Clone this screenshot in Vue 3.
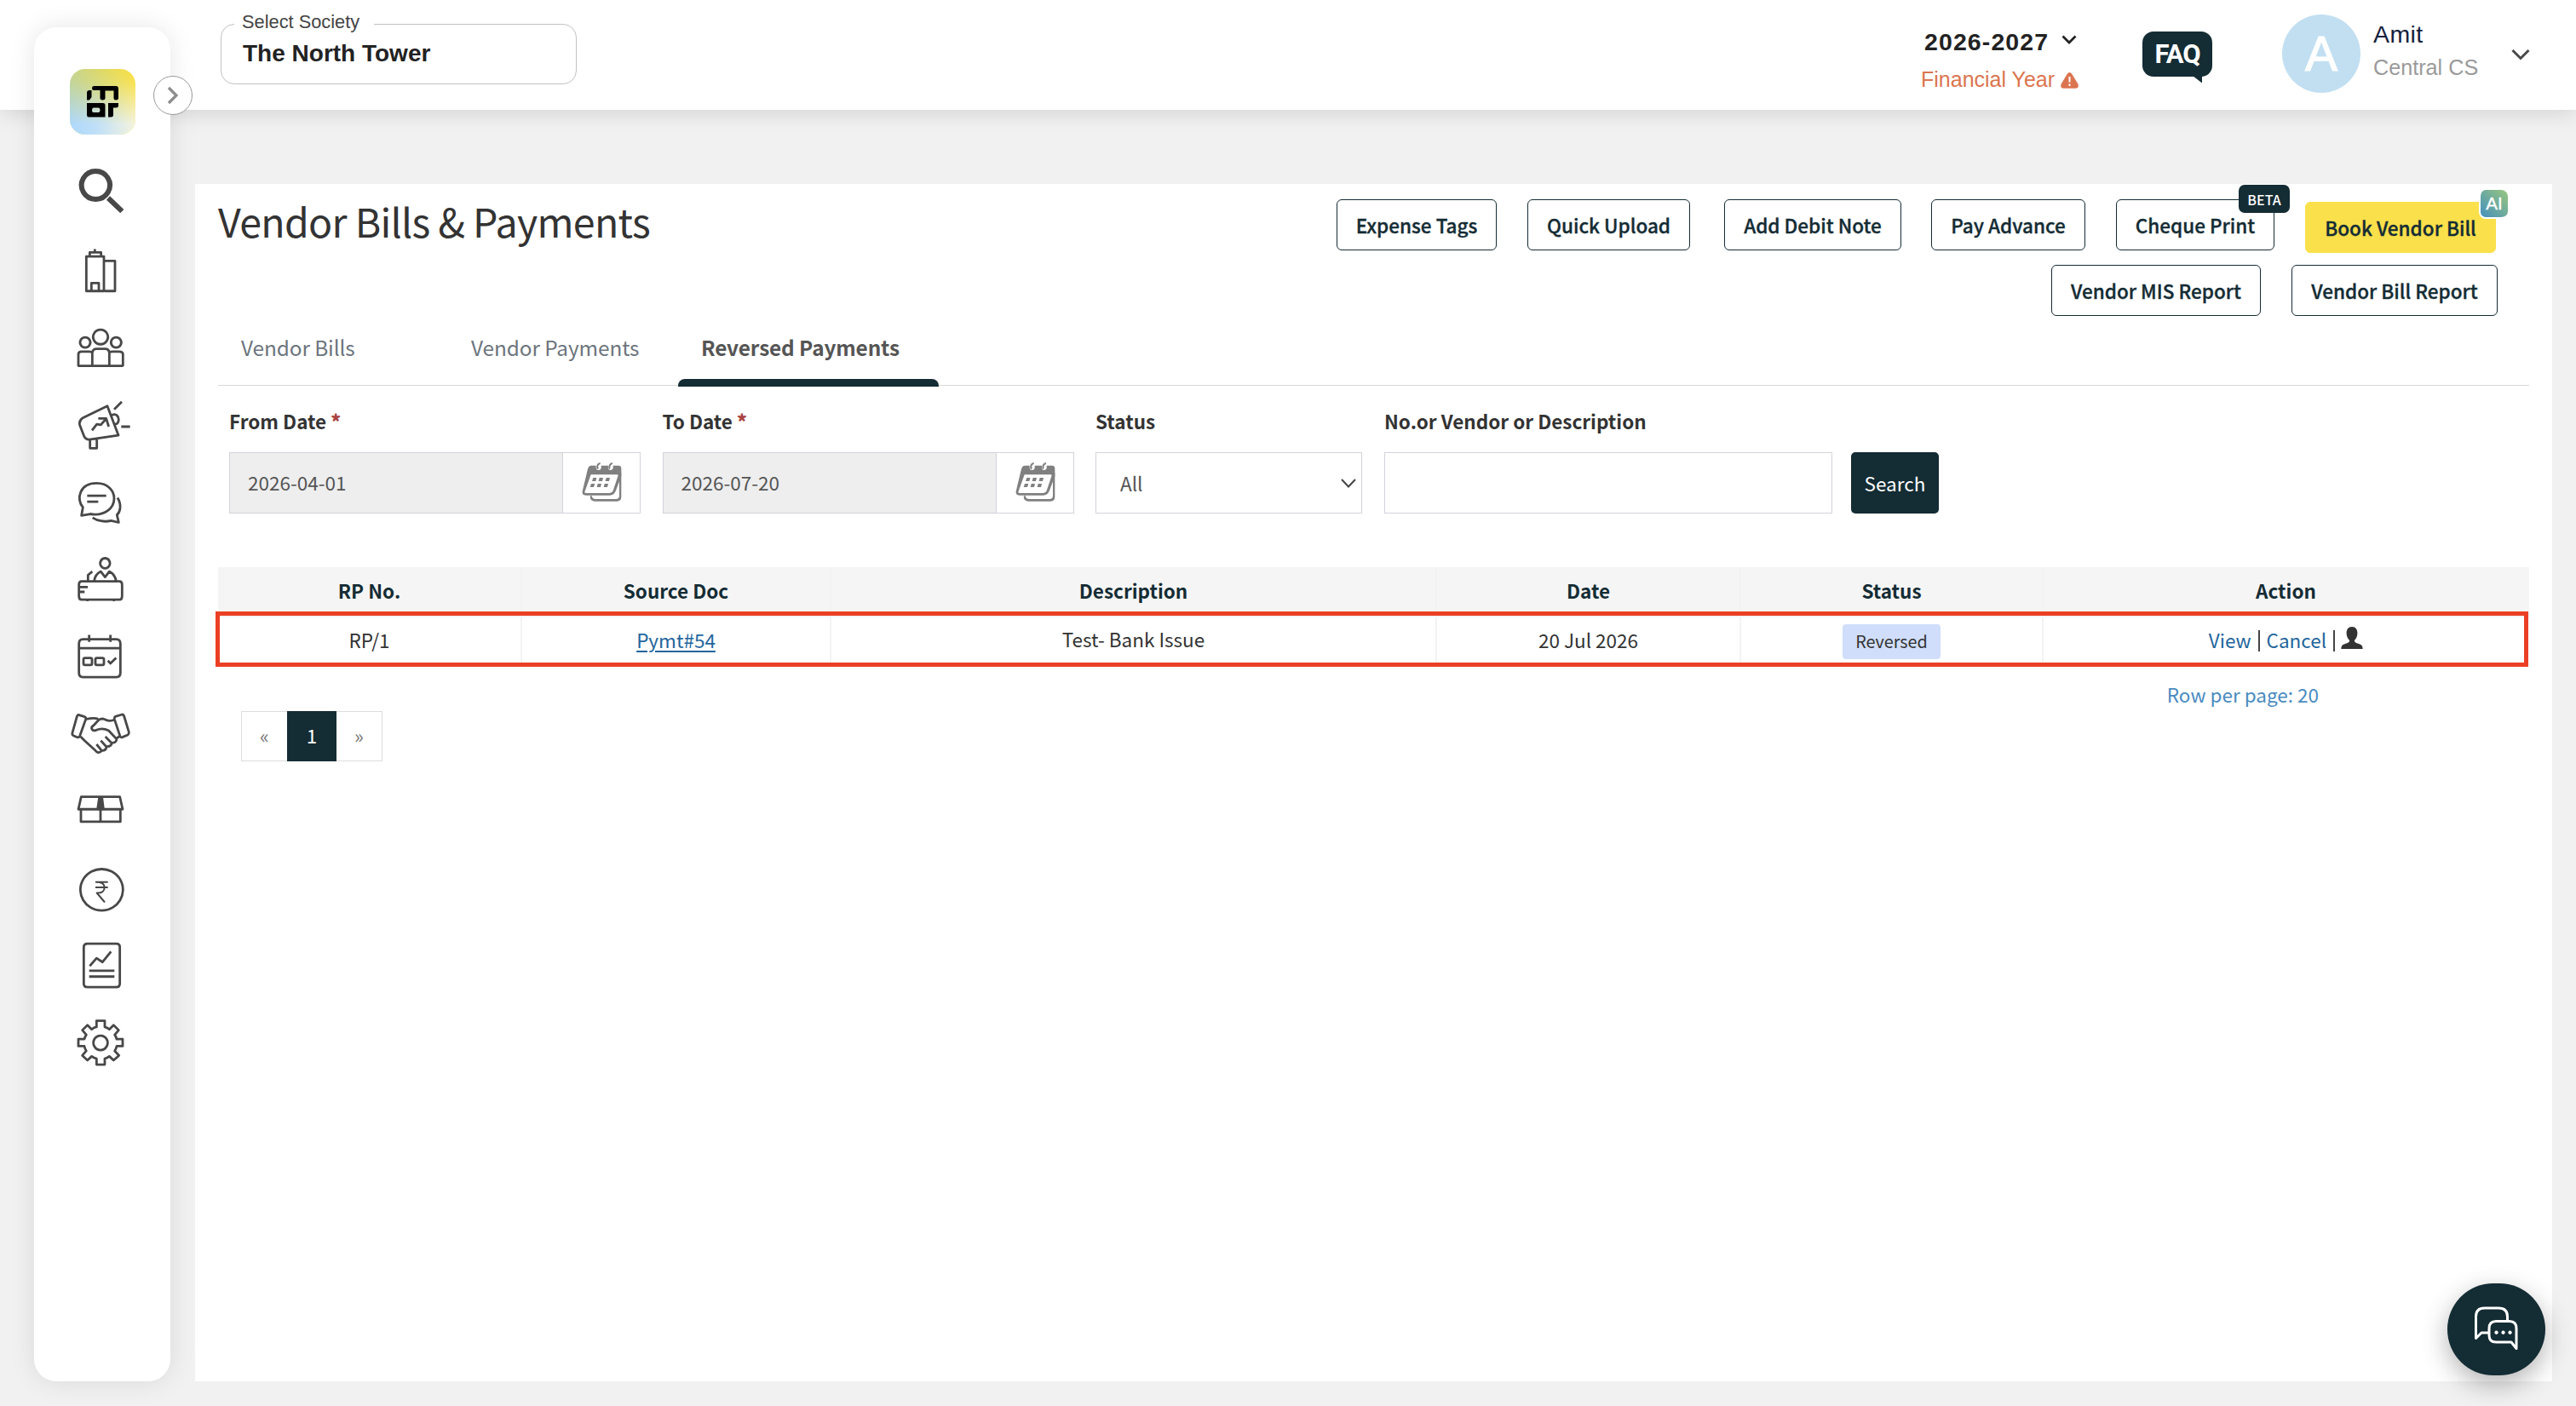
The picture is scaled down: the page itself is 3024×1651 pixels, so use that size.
<script setup>
const frameA = 'translate(60 60) scale(0.3333 0.3571)'
const frameB = 'translate(60 560) scale(0.3333 0.4591)'

const navIcons = [
  { name: 'search', frame: frameA, paths: [
    { d: 'M157 395a50 46 0 1 0 .1 0Z', w: 6 },
    { d: 'M201 483L250 527', w: 6 },
  ] },
  { name: 'society', frame: frameA, paths: [
    { d: 'M124 675H186V789H124ZM189 690H225V789H189M136 672V662H176V672M154 660V651M142 788V763H168V788' },
  ] },
  { name: 'members', frame: frameA, paths: [
    { d: 'M174 916a26 24 0 1 0 .1 0ZM120 941a18 17 0 1 0 .1 0ZM229 941a18 17 0 1 0 .1 0Z' },
    { d: 'M96 1036V997Q96 988 107 988H134Q143 988 145 992M145 1034V992Q147 979 160 979H190Q204 979 205 992V1034M205 992Q207 988 215 988H240Q253 988 253 997V1036M94 1035H254' },
  ] },
  { name: 'announcements', frame: frameA, paths: [
    { d: 'M198 1167L237 1263L135 1277Q122 1278 116 1266L101 1230Q97 1216 110 1207ZM214 1197C230 1190 238 1202 238 1212C237 1222 232 1228 225 1226M137 1279V1306H161V1276M222 1178L249 1153M247 1235H278M144 1247L161 1227L175 1229L194 1209M166 1208H194L203 1235' },
  ] },
  { name: 'messages', frame: frameA, paths: [
    { d: 'M107 1527L112 1500C88 1475 98 1421 160 1421C202 1421 222 1447 222 1471C222 1502 190 1530 138 1522ZM127 1462H194M127 1482H166M234 1469C249 1492 244 1515 232 1525L238 1550L211 1544C188 1550 162 1544 146 1534' },
  ] },
  { name: 'helpdesk', frame: frameB, paths: [
    { d: 'M190 208a17 13 0 1 0 .1 0ZM107 267H241Q250 267 250 276V305Q250 314 241 314H107Q98 314 98 305V276Q98 267 107 267ZM152 266Q154 250 175 242L190 256L205 242Q224 248 229 266M130 266V251L145 242M98 282H129M98 294H118M124 315H132M217 315H225' },
  ] },
  { name: 'calendar', frame: frameB, paths: [
    { d: 'M112 415H230Q244 415 244 427V501Q244 512 230 512H112Q98 512 98 501V427Q98 415 112 415ZM98 438H244M134 404V422M209 404V422M119 463H139Q144 463 144 467V477Q144 481 139 481H119Q114 481 114 477V467Q114 463 119 463ZM161 463H181Q186 463 186 467V477Q186 481 181 481H161Q156 481 156 477V467Q156 463 161 463ZM200 470L209 477L229 463' },
  ] },
  { name: 'vendors', frame: 'translate(76 830) scale(0.3333)', paths: [
    { d: 'M48 28L70 35Q76 38 74 44L53 103Q50 109 44 107L30 101Q25 98 27 91L43 34Q45 29 48 28ZM178 34L202 27Q207 27 209 33L226 89Q227 95 222 99L203 107Q197 109 195 104L175 43Q174 37 178 34Z' },
    { d: 'M75 43C92 42 102 36 118 43M56 105L70 119L108 154Q118 166 128 157L130 154L112 132M130 154Q145 155 147 141L127 119M147 140Q163 141 166 128L143 105M166 127Q184 126 182 113L155 84Q133 72 111 82C95 88 89 72 102 65L120 46Q132 38 145 46Q160 52 174 46M182 112L192 104' },
  ] },
  { name: 'inventory', frame: frameB, paths: [
    { d: 'M106 818H242L252 850H96ZM105 850V882H244V850M174 818V882' },
    { d: 'M170 820H179L184 849H164Z', fill: true },
  ] },
  { name: 'accounts', frame: frameB, paths: [
    { d: 'M178 1003a75 53 0 1 0 .1 0Z' },
    { d: 'M156 1036H200M156 1050H200M158 1036Q188 1036 188 1050Q188 1065 161 1064L189 1088', w: 2 },
  ] },
  { name: 'reports', frame: frameB, paths: [
    { d: 'M128 1194H230Q242 1194 242 1203V1296Q242 1305 230 1305H128Q115 1305 115 1296V1203Q115 1194 128 1194ZM136 1251L160 1231L181 1241L211 1214M134 1263H223M134 1278H223' },
  ] },
  { name: 'settings', frame: frameB, paths: [
    { d: 'M160 1391H189V1407Q198 1409 205 1413L220 1402L238 1415L224 1427Q230 1433 231 1438H252V1456H231Q229 1463 224 1468L239 1480L220 1492L205 1482Q198 1486 189 1488V1503H160V1488Q150 1486 143 1482L128 1492L110 1480L124 1468Q119 1463 117 1456H96V1438H117Q119 1432 124 1427L110 1415L128 1402L143 1413Q151 1408 160 1407ZM174 1429a25 18.500 0 1 0 .1 0Z' },
  ] },
]

const actions = [
  { label: 'Expense Tags', width: 188 },
  { label: 'Quick Upload', width: 191, gap: 36 },
  { label: 'Add Debit Note', width: 208, gap: 40 },
  { label: 'Pay Advance', width: 181, gap: 35 },
  { label: 'Cheque Print', width: 186, gap: 36, badge: 'BETA' },
]
const tabs = ['Vendor Bills', 'Vendor Payments', 'Reversed Payments']
const columns = ['RP No.', 'Source Doc', 'Description', 'Date', 'Status', 'Action']
const dates = [
  { label: 'From Date', value: '2026-04-01' },
  { label: 'To Date', value: '2026-07-20' },
]
</script>

<template>
  <div class="page">
    <header class="topbar">
      <div class="society">
        <span class="society-label">Select Society</span>
        <span class="society-name">The North Tower</span>
      </div>
      <div class="year">
        <div class="year-value">
          <span>2026-2027</span>
          <svg width="18" height="11" viewBox="0 0 18 11"><path d="M1.500 1.500L9 9L16.500 1.500" fill="none" stroke="#222" stroke-width="2.800" /></svg>
        </div>
        <div class="year-note">
          <span>Financial Year</span>
          <svg width="21" height="19" viewBox="0 0 21 19">
            <path d="M7.800 1.700Q10.500-1.600 13.200 1.700L20.300 13.500Q22 18.500 17.500 18.700H3.500Q-1 18.500.7 13.500Z" fill="#db7550" />
            <path d="M10.500 5V11.500M10.500 13.500V16" stroke="#fff" stroke-width="2" />
          </svg>
        </div>
      </div>
      <div class="faq">
        <span>FAQ</span>
        <svg class="faq-tail" width="12" height="9" viewBox="0 0 12 9"><path d="M0 0H11V8.500Z" fill="#142c34" /></svg>
      </div>
      <div class="avatar">A</div>
      <div class="user">
        <span class="user-name">Amit</span>
        <span class="user-role">Central CS</span>
      </div>
      <svg class="user-caret" width="22" height="14" viewBox="0 0 22 14"><path d="M1.500 2L11 11.500L20.500 2" fill="none" stroke="#484848" stroke-width="3" /></svg>
    </header>

    <aside class="sidebar">
      <svg class="logo" width="77" height="77" viewBox="82 81 77 77">
        <defs>
          <linearGradient id="lg-top" x1="0" y1="0" x2="1" y2="0"><stop offset="0" stop-color="#c6d48c" /><stop offset="1" stop-color="#fae03f" /></linearGradient>
          <linearGradient id="lg-bottom" x1="0" y1="0" x2="1" y2="0"><stop offset="0" stop-color="#aed8fc" /><stop offset=".4" stop-color="#bfdff8" /><stop offset="1" stop-color="#f5f4df" /></linearGradient>
          <linearGradient id="lg-fade" x1="0" y1="0" x2="0" y2="1"><stop offset="0" stop-color="#000" /><stop offset=".2" stop-color="#222" /><stop offset=".85" stop-color="#fff" /></linearGradient>
          <mask id="lg-mask"><rect x="82" y="81" width="77" height="77" fill="url(#lg-fade)" /></mask>
        </defs>
        <rect x="82" y="81" width="77" height="77" rx="18" fill="url(#lg-top)" />
        <rect x="82" y="81" width="77" height="77" rx="18" fill="url(#lg-bottom)" mask="url(#lg-mask)" />
        <path d="M110 101H136Q139 101 139 104V115Q139 117.500 136 117.500Q133.500 117.500 133.500 115V106.500H123.500V115Q123.500 117.500 120.500 117.500Q117.500 117.500 117.500 115V106H110Q108 106 108 103.500Q108 101 110 101ZM105 106H107.500V114L105 117.500H102V109Q102 106 105 106ZM102 121H121Q123.500 121 123.500 123.500V137.500H104Q102 137.500 102 135ZM109.500 126.500Q108 127 108 129Q108 132 109.500 132H115.500Q117.500 132 117.500 129Q117.500 126.500 115.500 126.500ZM127 121H139V124Q139 126.500 136 126.500H133V135Q133 137.500 130 137.500H127Z" fill-rule="evenodd" fill="#000" />
      </svg>
      <nav class="nav">
        <svg v-for="(icon, i) in navIcons" :key="icon.name" width="80" height="91" :viewBox="`80 ${179 + i * 91} 80 91`">
          <g :transform="icon.frame">
            <path
              v-for="(p, j) in icon.paths" :key="j" :d="p.d"
              :fill="p.fill ? '#484848' : 'none'" stroke="#484848" :stroke-width="p.w || 2.8"
              stroke-linejoin="round" vector-effect="non-scaling-stroke"
            />
          </g>
        </svg>
      </nav>
      <button class="expand">
        <svg width="14" height="22" viewBox="0 0 14 22"><path d="M2 2L11 11L2 20" fill="none" stroke="#8c8c8c" stroke-width="3.200" /></svg>
      </button>
    </aside>

    <main class="card">
      <section class="card-head">
        <h1>Vendor Bills &amp; Payments</h1>
        <div class="actions">
          <div class="action-row">
            <button v-for="a in actions" :key="a.label" class="btn" :style="{ width: a.width + 'px', marginLeft: (a.gap || 0) + 'px' }">
              {{ a.label }}<span v-if="a.badge" class="beta">{{ a.badge }}</span>
            </button>
            <button class="btn book">Book Vendor Bill<span class="ai">AI</span></button>
          </div>
          <div class="action-row second">
            <button class="btn mis">Vendor MIS Report</button>
            <button class="btn bill">Vendor Bill Report</button>
          </div>
        </div>
      </section>

      <div class="tabs">
        <a v-for="(t, i) in tabs" :key="t" class="tab" :class="{ active: i === 2 }">{{ t }}</a>
      </div>

      <form class="filters">
        <div v-for="d in dates" :key="d.label" class="field date">
          <label>{{ d.label }} <b class="req">*</b></label>
          <div class="control">
            <span class="date-value">{{ d.value }}</span>
            <span class="date-icon">
              <svg width="48" height="48" viewBox="38 36 144 144">
                <path d="M163 80L177 75V160Q177 176 162 176H84Q68 176 67 160L72 154Q74 168 86 168H158Q170 168 170 156V90Z" fill="#808080" />
                <path d="M72 50H88Q86 67 98 66Q108 64 106 50H131Q129 67 140 66Q150 64 148 50H167Q177 50 177 60V88L158 138Q152 155 136 155H52Q38 155 40 141L58 66Q61 50 72 50ZM70 82L49 140Q46 147 54 147H136Q145 147 148 139L167 82Z" fill-rule="evenodd" fill="#808080" />
                <path d="M96 61Q91 58 93 51Q95 43 103 42M137 61Q133 58 136 51Q138 43 146 42" fill="none" stroke="#808080" stroke-width="6" />
                <path d="M78 93H90L87 105H74ZM100 93H113L110 105H97ZM124 93H137L134 105H121ZM71 114H84L80 126H67ZM94 114H107L104 126H91ZM118 114H131L128 126H115Z" fill="#808080" />
              </svg>
            </span>
          </div>
        </div>
        <div class="field status">
          <label>Status</label>
          <div class="control select">
            <span>All</span>
            <svg width="18" height="11" viewBox="0 0 18 11"><path d="M1 1L9 9.500L17 1" fill="none" stroke="#444" stroke-width="2" /></svg>
          </div>
        </div>
        <div class="field query">
          <label>No.or Vendor or Description</label>
          <div class="control"></div>
        </div>
        <button type="button" class="search-btn">Search</button>
      </form>

      <div class="table">
        <div class="row thead">
          <div v-for="c in columns" :key="c" class="cell">{{ c }}</div>
        </div>
        <div class="row tbody">
          <div class="cell">RP/1</div>
          <div class="cell"><a class="doc">Pymt#54</a></div>
          <div class="cell desc">Test- Bank Issue</div>
          <div class="cell">20 Jul 2026</div>
          <div class="cell"><span class="pill">Reversed</span></div>
          <div class="cell ops">
            <a>View</a><i class="bar"></i><a>Cancel</a><i class="bar"></i>
            <svg width="26" height="26" viewBox="0 0 26 26"><path d="M13 0C8.500 0 6.600 3.500 6.600 7.500C6.600 11.500 8.300 14 10.200 16C10 18.500 8.500 19 5 20C2 21 .5 22 .3 26H25.700C25.500 22 24 21 21 20C17.500 19 16 18.500 15.800 16C17.700 14 19.400 11.500 19.400 7.500C19.400 3.500 17.500 0 13 0Z" fill="#333" /></svg>
          </div>
        </div>
      </div>

      <div class="per-page">Row per page: 20</div>
      <div class="pagination">
        <span class="pg">«</span><span class="pg current">1</span><span class="pg">»</span>
      </div>
    </main>

    <button class="chat">
      <svg width="52" height="52" viewBox="0 0 52 52" fill="none" stroke="#fff" stroke-width="3" stroke-linejoin="round">
        <path d="M19 31H9L2.500 37.500V12Q2.500 2 12.500 2H29Q39.500 2 39.500 12V17" />
        <path d="M26 17.500H42Q50 17.500 50 26V49.500L44 42H26Q18 42 18 34V26Q18 17.500 26 17.500Z" />
        <path d="M26.500 28.500a2.200 2.200 0 1 0 .1 0ZM34.500 28.500a2.200 2.200 0 1 0 .1 0ZM42.500 28.500a2.200 2.200 0 1 0 .1 0Z" fill="#fff" stroke="none" />
      </svg>
    </button>
  </div>
</template>

<style>
html, body { margin: 0; background: #f1f1f1; }
</style>

<style scoped>
.page {
  position: relative;
  box-sizing: border-box;
  width: 3024px;
  height: 1651px;
  overflow: hidden;
  background: #f1f1f1;
  font-family: "Noto Sans CJK SC", "Noto Sans", sans-serif;
  font-size: 22.5px;
  color: #333;
}
.page * { box-sizing: border-box; }
button { font: inherit; padding: 0; white-space: nowrap; }
svg { display: block; flex: none; }

.topbar {
  display: flex;
  align-items: flex-start;
  height: 129px;
  padding: 0 54px 0 259px;
  background: #fff;
  box-shadow: 0 4px 24px rgba(0, 0, 0, .12);
  font-family: "Liberation Sans", Arial, sans-serif;
}
.society {
  display: flex;
  flex-direction: column;
  width: 418px;
  height: 71px;
  margin-top: 28px;
  margin-right: auto;
  padding-left: 15px;
  border: 1px solid #c2c2c2;
  border-radius: 16px;
}
.society-label {
  align-self: flex-start;
  width: 164px;
  height: 24px;
  margin-top: -15px;
  padding-left: 9px;
  background: #fff;
  font-size: 21.8px;
  line-height: 24px;
  color: #444;
}
.society-name {
  padding-left: 10px;
  margin-top: 9px;
  font-size: 28px;
  line-height: 32px;
  font-weight: 700;
  color: #222;
}
.year { margin-top: 31px; width: 184px; }
.year-value { display: flex; align-items: center; gap: 15px; padding-left: 4px; font-size: 28.5px; line-height: 36px; font-weight: 700; letter-spacing: 1.1px; color: #222; }
.year-value svg { margin-top: -6px; }
.year-note { display: flex; align-items: center; gap: 7px; font-size: 25px; line-height: 30px; margin-top: 11px; color: #db7550; white-space: nowrap; }
.year-note svg { margin-top: 3px; }
.faq {
  position: relative;
  width: 82px;
  height: 53px;
  margin: 37px 0 0 76px;
  border-radius: 13px;
  background: #142c34;
  color: #fff;
  font-family: Roboto, sans-serif;
  font-size: 31px;
  line-height: 54px;
  font-weight: 700;
  letter-spacing: -1px;
  text-align: center;
}
.faq-tail { position: absolute; left: 59px; top: 52px; }
.avatar {
  width: 92px;
  height: 92px;
  margin: 17px 0 0 82px;
  border-radius: 50%;
  background: #c2dff2;
  color: #fff;
  font-size: 57px;
  line-height: 92px;
  font-weight: 400;
  -webkit-text-stroke: 1.2px #fff;
  text-align: center;
}
.user { display: flex; flex-direction: column; width: 177px; padding-left: 15px; margin-top: 24px; }
.user-name { font-size: 28.500px; line-height: 32px; color: #16213e; letter-spacing: .4px; }
.user-role { font-size: 25.200px; line-height: 30px; margin-top: 8px; color: #9a9a9a; }
.user-caret { margin-top: 57px; }

.sidebar {
  position: absolute;
  left: 40px;
  top: 32px;
  display: flex;
  flex-direction: column;
  align-items: center;
  width: 160px;
  height: 1590px;
  border-radius: 26px;
  background: #fff;
  box-shadow: 0 0 30px rgba(0, 0, 0, .1);
}
.logo { margin: 49px 0 0 1px; }
.nav { display: flex; flex-direction: column; margin-top: 21px; }
.expand {
  position: absolute;
  left: 140px;
  top: 57px;
  display: flex;
  align-items: center;
  justify-content: center;
  width: 46px;
  height: 46px;
  border: 1px solid #999;
  border-radius: 50%;
  background: #fff;
}

.card {
  width: 2767px;
  height: 1406px;
  margin: 87px 0 0 229px;
  padding: 0 27px;
  background: #fff;
  position: relative;
}
.card-head { display: flex; justify-content: space-between; height: 155px; }
h1 { margin: 13px 0 0; font-size: 46.5px; line-height: 60px; font-weight: 400; letter-spacing: -.7px; white-space: nowrap; }
.actions { display: flex; flex-direction: column; align-items: flex-end; padding: 18px 37px 0 0; }
.action-row { display: flex; padding-right: 2px; }
.action-row.second { padding: 0; margin-top: 14px; }
.btn {
  position: relative;
  height: 60px;
  border: 1.5px solid #142c34;
  border-radius: 6px;
  background: #fff;
  color: #142c34;
  font-weight: 500;
  line-height: 56px;
  -webkit-text-stroke: .35px currentColor;
}
.book { width: 224px; margin: 3px 0 0 36px; border-color: #fae04b; background: #fae04b; }
.mis { width: 246px; }
.bill { width: 242px; margin-left: 36px; }
.beta {
  position: absolute;
  right: -19px;
  top: -18px;
  width: 60px;
  height: 33px;
  border-radius: 7px;
  background: #142c34;
  color: #fff;
  font-size: 16px;
  line-height: 34px;
  -webkit-text-stroke: 0;
}
.ai {
  position: absolute;
  right: -15px;
  top: -15px;
  width: 34px;
  height: 34px;
  border: 2px solid #fff;
  border-top: 0;
  border-right: 0;
  border-radius: 8px;
  background: linear-gradient(45deg, #4590bd, #98c67e);
  color: #fff;
  font-family: "Liberation Sans", sans-serif;
  font-size: 20.5px;
  line-height: 32px;
  font-weight: 400;
}

.tabs { display: flex; height: 82px; border-bottom: 1px solid #d9d9d9; }
.tab { position: relative; width: 270px; padding-left: 27px; font-size: 24.400px; line-height: 73px; letter-spacing: -.1px; color: #6c757d; white-space: nowrap; }
.tab.active { width: 306px; padding-left: 27px; color: #555; font-weight: 700; letter-spacing: -.15px; }
.tab.active::after { content: ""; position: absolute; left: 0; right: 0; bottom: -2px; height: 9px; border-radius: 8px 8px 0 0; background: #142c34; }

.filters { display: flex; align-items: flex-end; padding: 26px 0 0 13px; }
.field label { display: block; height: 30px; margin-bottom: 22px; line-height: 30px; font-weight: 700; white-space: nowrap; }
.req { color: #a94442; }
.control { display: flex; height: 72px; border: 1px solid #d3d3dc; line-height: 69px; color: #555; }
.date { width: 483px; margin-right: 25.500px; }
.date-value { flex: 1; padding-left: 21px; background: #eee; border-right: 1px solid #d3d3dc; }
.date-icon { display: flex; align-items: center; justify-content: center; width: 90px; padding: 0 0 2px 2px; }
.status { width: 313px; margin-right: 26px; }
.select { align-items: center; justify-content: space-between; padding: 0 6px 0 28px; }
.query { width: 526px; margin-right: 22px; }
.search-btn { width: 103px; height: 72px; border: 0; border-radius: 5px; background: #142c34; color: #fff; line-height: 70px; }

.table { margin-top: 63px; }
.row { display: grid; grid-template-columns: 357px 363px 711px 357px 355px 569px; }
.cell { display: flex; align-items: center; justify-content: center; }
.cell:not(:last-child) { border-right: 2px solid #f3f3f3; }
.thead { height: 52px; background: #f5f5f5; color: #142c34; font-weight: 700; line-height: 54px; }
.thead .cell:not(:last-child) { border-color: #f2f2f2; }
.tbody { position: relative; height: 65px; box-shadow: inset 0 7px #f3f3f3; }
.tbody::after { content: ""; position: absolute; left: -3px; right: 1px; top: 0; bottom: 0; border: 5px solid #eb3f25; }
.doc, .ops a { color: #23659c; }
.doc { text-decoration: underline; text-decoration-thickness: 2px; text-underline-offset: 3px; }
.desc { padding-bottom: 2px; }
.pill { height: 41px; margin-top: 6px; padding: 0 15px; border-radius: 4px; background: #d0defb; font-size: 19.800px; line-height: 39px; }
.ops .bar { width: 2px; height: 25px; margin: 3px 8px 0; background: #444; }
.ops svg { margin: -3px 0 0 -1px; }
.per-page { margin-top: 16px; padding-right: 247px; line-height: 32px; text-align: right; color: #4a8bbf; }
.pagination { display: flex; width: 166px; height: 59px; margin: 4px 0 0 27px; border: 1px solid #ddd; }
.pg { flex: 1; line-height: 55px; text-align: center; color: #777; }
.pg.current { flex: 0 0 58px; margin: -1px 0; line-height: 57px; background: #142c34; color: #fff; }

.chat {
  position: absolute;
  left: 2873px;
  top: 1507px;
  display: flex;
  align-items: center;
  justify-content: center;
  width: 115px;
  height: 108px;
  border: 0;
  border-radius: 54px;
  background: #142c34;
  box-shadow: 0 10px 30px rgba(0, 0, 0, .3);
}
.chat svg { margin-left: -2px; margin-top: -2px; }
</style>
